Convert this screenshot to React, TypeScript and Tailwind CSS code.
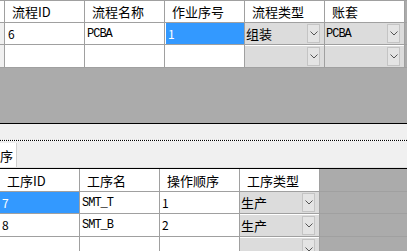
import React from "react";

const font = { fontFamily: "'Noto Sans CJK SC', 'Noto Sans', sans-serif" };
const mono = { fontFamily: "'Liberation Mono', 'Noto Sans CJK SC', monospace" };

function Chevron() {
  return (
    <svg width="8" height="5" viewBox="0 0 8 5" className="block">
      <path d="M0.5 0.5 L4 4 L7.5 0.5" fill="none" stroke="#555" strokeWidth="1" />
    </svg>
  );
}

function Combo({ text, btnW = 13 }: { text?: string; btnW?: number }) {
  const isLatin = !!text && /^[A-Z]/.test(text);
  return (
    <div className="flex h-full w-full items-stretch bg-[#dcdcdc] pr-[4px]">
      <div
        className="flex flex-1 items-center pl-[1px] text-[12px] leading-none text-black"
        style={isLatin ? { ...mono, letterSpacing: "-1px" } : { ...font, fontSize: 13 }}
      >
        {text}
      </div>
      <div
        className="my-[1px] flex items-center justify-center border border-[#c4c4c4] bg-[#e4e4e4]"
        style={{ width: btnW }}
      >
        <Chevron />
      </div>
    </div>
  );
}

function Cell({
  w,
  children,
  className = "",
}: {
  w: string;
  children?: React.ReactNode;
  className?: string;
}) {
  return <div className={`${w} shrink-0 border-r border-[#a0a0a0] ${className}`}>{children}</div>;
}

function HeadText({ t }: { t: string }) {
  return (
    <div className="flex h-full items-center pl-[7px] text-[13px] leading-none text-black" style={font}>
      {t}
    </div>
  );
}

function DataText({ t, white = false, m = false }: { t: string; white?: boolean; m?: boolean }) {
  return (
    <div
      className={`flex h-full items-center pl-[2px] text-[12px] leading-none ${white ? "text-white" : "text-black"}`}
      style={m ? { ...mono, fontSize: 12, letterSpacing: "-1px" } : font}
    >
      {t}
    </div>
  );
}

export default function App() {
  return (
    <div className="flex h-[251px] w-[407px] flex-col overflow-hidden bg-[#ababab]" style={font}>
      {/* Top grid */}
      <div className="flex shrink-0 flex-col">
        <div className="flex h-[23px] shrink-0 border-b border-t border-[#a0a0a0] bg-white">
          <Cell w="w-[5px]" />
          <Cell w="w-[80px]"><HeadText t="流程ID" /></Cell>
          <Cell w="w-[80px]"><HeadText t="流程名称" /></Cell>
          <Cell w="w-[80px]"><HeadText t="作业序号" /></Cell>
          <Cell w="w-[80px]"><HeadText t="流程类型" /></Cell>
          <Cell w="w-[80px]"><HeadText t="账套" /></Cell>
          <div className="flex-1 bg-[#ababab]" />
        </div>
        <div className="flex h-[22px] shrink-0 border-b border-[#a0a0a0] bg-white">
          <Cell w="w-[5px]" className="bg-[#f0f0f0]" />
          <Cell w="w-[80px]"><div className="h-full pl-[1px]"><DataText t="6" /></div></Cell>
          <Cell w="w-[80px]"><DataText t="PCBA" m /></Cell>
          <Cell w="w-[80px]" className="bg-white pl-[1px]">
            <div className="h-full bg-[#3399ff]"><DataText t="1" white /></div>
          </Cell>
          <Cell w="w-[80px]"><Combo text="组装" /></Cell>
          <Cell w="w-[80px]"><Combo text="PCBA" /></Cell>
          <div className="flex-1 bg-[#ababab]" />
        </div>
        <div className="flex h-[23px] shrink-0 border-b border-[#a0a0a0] bg-white">
          <Cell w="w-[5px]" className="bg-[#f0f0f0]" />
          <Cell w="w-[80px]" />
          <Cell w="w-[80px]" />
          <Cell w="w-[80px]" />
          <Cell w="w-[80px]" className="pt-[1px]"><Combo /></Cell>
          <Cell w="w-[80px]" className="pt-[1px]"><Combo /></Cell>
          <div className="flex-1 bg-[#ababab]" />
        </div>
      </div>
      <div className="h-[55px] shrink-0 bg-[#ababab]" />
      <div className="h-[1px] shrink-0 bg-black" />
      {/* Panel with splitter & tab */}
      <div className="flex h-[44px] shrink-0 flex-col bg-[#f0f0f0]">
        <div className="h-[15px] shrink-0" />
        <div className="h-[1px] shrink-0 bg-[repeating-linear-gradient(90deg,#d8d8d8_0_1px,#f8f8f8_1px_2px)]" />
        <div className="h-[1px] shrink-0 bg-[repeating-linear-gradient(90deg,#000_0_1px,#fff_1px_2px)]" />
        <div className="h-[2px] shrink-0" />
        <div className="flex h-[25px] shrink-0 border-b border-[#e2e2e2]">
          <div className="flex w-[17px] items-center border-r border-[#d0d0d0] bg-white text-[13px] leading-none text-black">
            序
          </div>
        </div>
      </div>
      <div className="h-[1px] shrink-0 bg-black" />
      {/* Bottom grid */}
      <div className="flex shrink-0 flex-col">
        <div className="flex h-[23px] shrink-0 border-b border-[#a0a0a0] bg-white">
          <Cell w="w-[80px]"><HeadText t="工序ID" /></Cell>
          <Cell w="w-[80px]"><HeadText t="工序名" /></Cell>
          <Cell w="w-[80px]"><HeadText t="操作顺序" /></Cell>
          <Cell w="w-[80px]"><HeadText t="工序类型" /></Cell>
          <div className="flex-1 bg-[#ababab]" />
        </div>
        <div className="flex h-[22px] shrink-0 border-b border-[#a0a0a0] bg-white">
          <Cell w="w-[80px]"><div className="h-full bg-[#3399ff]"><DataText t="7" white /></div></Cell>
          <Cell w="w-[80px]"><DataText t="SMT_T" m /></Cell>
          <Cell w="w-[80px]"><DataText t="1" /></Cell>
          <Cell w="w-[80px]"><Combo text="生产" /></Cell>
          <div className="flex-1 bg-[#ababab]" />
        </div>
        <div className="flex h-[23px] shrink-0 border-b border-[#a0a0a0] bg-white">
          <Cell w="w-[80px]"><DataText t="8" /></Cell>
          <Cell w="w-[80px]"><DataText t="SMT_B" m /></Cell>
          <Cell w="w-[80px]"><DataText t="2" /></Cell>
          <Cell w="w-[80px]" className="pt-[1px]"><Combo text="生产" /></Cell>
          <div className="flex-1 bg-[#ababab]" />
        </div>
        <div className="flex h-[23px] shrink-0 bg-white">
          <Cell w="w-[80px]" />
          <Cell w="w-[80px]" />
          <Cell w="w-[80px]" />
          <Cell w="w-[80px]" className="pt-[1px]"><Combo /></Cell>
          <div className="flex-1 bg-[#ababab]" />
        </div>
      </div>
    </div>
  );
}
